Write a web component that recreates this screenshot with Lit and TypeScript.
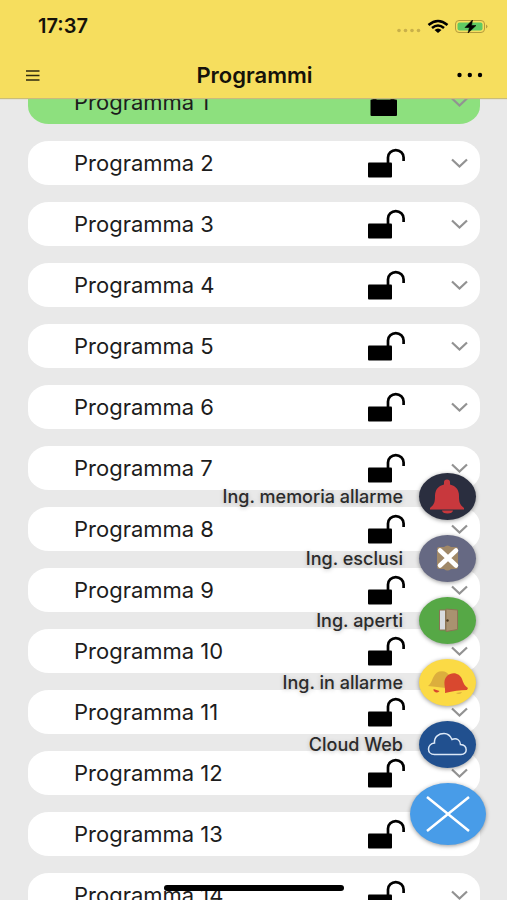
import { LitElement, html, css, svg } from "lit";
import { customElement, property } from "lit/decorators.js";
import { classMap } from "lit/directives/class-map.js";

const bellIcon = svg`
  <path fill="#c8383d" d="M25 9 q0 -2.500 3 -2.500 q3 0 3 2.500 v2.500 c6 1.500 9 5.500 9 11.500 c0 7 1 8.500 5 12 v1.500 h-34 v-1.500 c4 -3.500 5 -5 5 -12 c0 -6 3 -10 9 -11.500 z"/>
  <path fill="#c8383d" d="M23 37.500 h11 q-.5 3 -5.500 3 t-5.500 -3 z"/>`;
const excludedIcon = svg`
  <path fill="#a08868" d="M20 12 h5 q3.500 -3 7 0 h5 q2 0 2 2 v18 q0 2 -2 2 h-5 q-3.500 3 -7 0 h-5 q-2 0 -2 -2 v-18 q0 -2 2 -2 z"/>
  <path fill="none" stroke="#fff" stroke-width="4.600" stroke-linecap="round" d="M21 15.500 L37 30.500 M37 15.500 L21 30.500"/>`;
const doorIcon = svg`
  <path fill="#d9dcdf" stroke="#8b7454" d="M20.500 13 h6 v20 h-6 z"/>
  <path fill="#a99270" stroke="#8b7454" d="M27 12 L38.500 13 V32.500 L27 34.500 z"/>
  <circle cx="28.500" cy="23.500" r="1.200" fill="#4d3b20"/>`;
const alarmIcon = svg`
  <path fill="#dcae3d" d="M9 27 c5 -3 4 -12 11 -14.500 q7 -1.500 10 3.500 l-3 13 z"/>
  <path fill="#d9482f" d="M26 34 c1 -5 -3 -12 2 -17 c5 -5 13 -3 15 3 c1.500 4 2 6 6 9 l-1 2 c-7 0 -14 1 -22 3 z"/>
  <path fill="#d9482f" d="M14.500 30 l6 2 q-1 2 -4 1.200 q-2.500 -1 -2 -3.200 z"/>
  <path fill="#dcae3d" d="M37 34 l6 -1 q-1 2 -3 2 t-3 -1 z"/>`;
const cloudIcon = svg`
  <path fill="none" stroke="#dce8f7" stroke-width="1.500" d="M15.500 33.500 C7.500 33.500 7.500 23 15.500 22 C15 15.500 20 12.500 25 12.500 C29 12.500 31.500 15 33 18.500 C38 16.500 41.500 19.500 41.500 23.500 C49 24 49 33.500 42 33.500 Z"/>`;

const actions = [
  { label: "Ing. memoria allarme", tone: "night", icon: bellIcon },
  { label: "Ing. esclusi", tone: "slate", icon: excludedIcon },
  { label: "Ing. aperti", tone: "green", icon: doorIcon },
  { label: "Ing. in allarme", tone: "yellow", icon: alarmIcon },
  { label: "Cloud Web", tone: "navy", icon: cloudIcon },
];

const buttonReset = css`
  * { box-sizing: border-box; }
  button {
    border: 0;
    padding: 0;
    margin: 0;
    background: none;
    color: inherit;
    font: inherit;
    cursor: pointer;
  }
  svg { display: block; }
`;

@customElement("program-row")
class ProgramRow extends LitElement {
  @property() name = "";
  @property({ type: Boolean }) armed = false;

  static styles = [
    buttonReset,
    css`
      :host { display: block; }
      .row {
        display: flex;
        align-items: center;
        height: 44px;
        padding: 0 12px 0 46px;
        border-radius: 21px / 18px;
        background: #fff;
      }
      .armed { background: #8de07e; }
      .name { flex: 1; font-size: 22px; line-height: 28px; }
      .lock { margin-right: 46px; }
    `,
  ];

  render() {
    return html`
      <div class=${classMap({ row: true, armed: this.armed })}>
        <span class="name">${this.name}</span>
        <button class="lock" aria-label="${this.armed ? "Disinserisci" : "Inserisci"} ${this.name}">
          <svg width="37" height="30" viewBox="0 0 37 30">
            ${this.armed
              ? svg`<rect x="2.500" y="12.500" width="26.500" height="16.500" rx="1"/>
                  <path d="M6.500 14 V8 a9 8 0 0 1 18 0 V14" fill="none" stroke="#000" stroke-width="4"/>`
              : svg`<rect x="0" y="14.500" width="24" height="15" rx="1"/>
                  <path d="M20 15 V9.500 a7.800 7.300 0 0 1 15.600 0 V13" fill="none" stroke="#000" stroke-width="2.700"/>`}
          </svg>
        </button>
        <button aria-label="Dettagli ${this.name}">
          <svg width="17" height="10" viewBox="0 0 17 10">
            <path d="M1 1.500 L8.500 8.500 L16 1.500" fill="none" stroke="#929292" stroke-width="2.200"/>
          </svg>
        </button>
      </div>
    `;
  }
}

@customElement("app-root")
class AppRoot extends LitElement {
  static styles = [
    buttonReset,
    css`
      :host {
        display: flex;
        flex-direction: column;
        position: relative;
        height: 100vh;
        overflow: hidden;
        background: #e9e9e9;
        color: #1c1c1c;
        font-family: Inter, "Liberation Sans", sans-serif;
      }
      header {
        flex: none;
        position: relative;
        background: #f6de5e;
        color: #15120a;
        box-shadow: 0 1px 1px #c9bc7c;
      }
      .status {
        display: flex;
        align-items: center;
        justify-content: space-between;
        height: 52px;
        padding: 0 19px 0 38px;
      }
      .time { font-size: 20px; line-height: 24px; font-weight: 600; }
      .nav {
        display: grid;
        grid-template-columns: 1fr auto 1fr;
        align-items: center;
        height: 46px;
        padding: 0 24px 0 26px;
      }
      .more { justify-self: end; }
      h1 { margin: 0; font-size: 22px; line-height: 28px; font-weight: 600; }
      main { flex: 1; min-height: 0; overflow: hidden; }
      ul { list-style: none; margin: 0; padding: 0; }
      .programs {
        display: flex;
        flex-direction: column;
        gap: 17px;
        margin: -18px 27px 0 28px;
      }
      .actions {
        position: absolute;
        right: 21px;
        bottom: 55px;
        display: flex;
        flex-direction: column;
        align-items: flex-end;
        gap: 15px;
      }
      .action { display: flex; align-items: center; gap: 16px; margin-right: 10px; }
      .label {
        font-size: 18px;
        line-height: 22px;
        font-weight: 500;
        color: #2b2b2b;
        text-shadow: 0 1px 4px #bbb;
      }
      .disc {
        display: block;
        border-radius: 50%;
        box-shadow: 0 1px 4px #0006;
      }
      .night { background: #2a2e3f; }
      .slate { background: #666983; }
      .green { background: #56a846; }
      .yellow { background: #fbda45; }
      .navy { background: #21508f; }
      .close { background: #489ce8; }
      .home {
        position: absolute;
        bottom: 9px;
        left: 0;
        right: 0;
        width: 180px;
        height: 6px;
        margin: 0 auto;
        border-radius: 3px;
        background: #000;
      }
    `,
  ];

  render() {
    return html`
      <header>
        <div class="status">
          <span class="time">17:37</span>
          <svg width="92" height="16" viewBox="0 0 92 16" aria-hidden="true">
            <g fill="#c9b04a">
              <circle cx="3" cy="12.500" r="1.800"/><circle cx="9.500" cy="12.500" r="1.800"/>
              <circle cx="16" cy="12.500" r="1.800"/><circle cx="22.500" cy="12.500" r="1.800"/>
            </g>
            <g fill="none" stroke="#000" stroke-width="2.600">
              <path d="M32.500 7 Q42 -1 51.500 7"/>
              <path d="M36 10 Q42 5 48 10"/>
            </g>
            <path d="M38.500 12 Q42 9 45.500 12 L42 15 Z"/>
            <rect x="59.500" y="2.500" width="29" height="12" rx="3.500" fill="none" stroke="#b49b3c"/>
            <rect x="61.500" y="4.500" width="25" height="8" rx="2" fill="#5fca63"/>
            <path d="M90 6.500 q3 2 0 4 z" fill="#b49b3c"/>
            <path d="M76.500 2 L69 9.500 H73.500 L72 15 L80 7.500 H75.500 Z" stroke="#000" stroke-width=".6"/>
          </svg>
        </div>
        <div class="nav">
          <button aria-label="Menu">
            <svg width="14" height="12" viewBox="0 0 14 12">
              <path d="M0 2 H13.500 M0 6.500 H13.500 M0 11 H13.500" stroke="#2e290f" stroke-width="1.600"/>
            </svg>
          </button>
          <h1>Programmi</h1>
          <button class="more" aria-label="Altro">
            <svg width="26" height="6" viewBox="0 0 26 6">
              <circle cx="2.500" cy="3" r="2.200"/><circle cx="12.800" cy="3" r="2.200"/><circle cx="23" cy="3" r="2.200"/>
            </svg>
          </button>
        </div>
      </header>
      <main>
        <ul class="programs">
          ${Array.from({ length: 14 }, (_, i) => html`
            <li><program-row name="Programma ${i + 1}" ?armed=${i === 0}></program-row></li>
          `)}
        </ul>
      </main>
      <div class="actions">
        ${actions.map((a) => html`
          <button class="action">
            <span class="label">${a.label}</span>
            <svg class="disc ${a.tone}" width="57" height="47" viewBox="0 0 57 47" aria-hidden="true">${a.icon}</svg>
          </button>
        `)}
        <button aria-label="Chiudi">
          <svg class="disc close" width="76" height="62" viewBox="0 0 76 62">
            <path d="M17 14 L59 48 M59 14 L17 48" stroke="#fff" stroke-width="2.500"/>
          </svg>
        </button>
      </div>
      <div class="home"></div>
    `;
  }
}
